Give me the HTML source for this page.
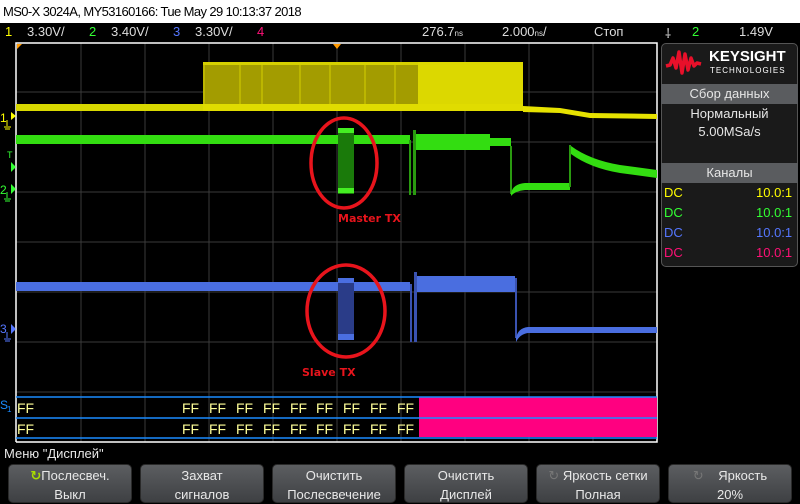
<!DOCTYPE html>
<html><head><meta charset="utf-8"><style>
*{margin:0;padding:0;box-sizing:border-box}
body{width:800px;height:503px;background:#000;position:relative;overflow:hidden;font-family:"Liberation Sans","DejaVu Sans",sans-serif}
.t{position:absolute;white-space:nowrap}
.btn{position:absolute;top:464px;width:124px;height:39px;border-radius:5px;background:linear-gradient(#5c5e61,#3e4043);border:1px solid #2a2a2a;color:#e8e8e8;font-size:13px;text-align:center;line-height:19px;padding-top:1px}
.hdr{position:absolute;left:661px;width:137px;height:20px;background:#5a5c5f;color:#e6e6e6;font-size:13px;text-align:center;line-height:20px}
</style></head><body>
<div style="position:absolute;left:0;top:0;width:800px;height:23px;background:#fff"></div>
<div class="t" style="left:3px;top:4px;font-size:13px;color:#000;letter-spacing:-0.6px">MS0-X 3024A, MY53160166: Tue May 29 10:13:37 2018</div>
<div class="t" style="left:5px;top:24px;font-size:13px;color:#ffff00">1</div>
<div class="t" style="left:27px;top:24px;font-size:13px;color:#ddd">3.30V/</div>
<div class="t" style="left:89px;top:24px;font-size:13px;color:#33ff33">2</div>
<div class="t" style="left:111px;top:24px;font-size:13px;color:#ddd">3.40V/</div>
<div class="t" style="left:173px;top:24px;font-size:13px;color:#5577ff">3</div>
<div class="t" style="left:195px;top:24px;font-size:13px;color:#ddd">3.30V/</div>
<div class="t" style="left:257px;top:24px;font-size:13px;color:#ff1177">4</div>
<div class="t" style="left:422px;top:24px;font-size:13px;color:#ddd">276.7<span style="font-size:8px">ns</span></div>
<div class="t" style="left:502px;top:24px;font-size:13px;color:#ddd">2.000<span style="font-size:8px">ns</span>/</div>
<div class="t" style="left:594px;top:24px;font-size:13px;color:#ddd">Стоп</div>
<div class="t" style="left:665px;top:24px;font-size:13px;color:#ddd">⸸</div>
<div class="t" style="left:692px;top:24px;font-size:13px;color:#33ff33">2</div>
<div class="t" style="left:739px;top:24px;font-size:13px;color:#ddd">1.49V</div>

<svg style="position:absolute;left:0;top:0" width="800" height="503">
<g stroke="#3a3a3a" stroke-width="1">
<line x1="81" y1="43" x2="81" y2="442"/><line x1="145" y1="43" x2="145" y2="442"/><line x1="209" y1="43" x2="209" y2="442"/><line x1="273" y1="43" x2="273" y2="442"/><line x1="337" y1="43" x2="337" y2="442"/><line x1="401" y1="43" x2="401" y2="442"/><line x1="465" y1="43" x2="465" y2="442"/><line x1="529" y1="43" x2="529" y2="442"/><line x1="593" y1="43" x2="593" y2="442"/>
<line x1="16" y1="92" x2="657" y2="92"/><line x1="16" y1="142" x2="657" y2="142"/><line x1="16" y1="192" x2="657" y2="192"/><line x1="16" y1="242" x2="657" y2="242"/><line x1="16" y1="292" x2="657" y2="292"/><line x1="16" y1="342" x2="657" y2="342"/><line x1="16" y1="392" x2="657" y2="392"/>
</g>
<polyline points="16,442 16,43 657,43 657,442 16,442" fill="none" stroke="#fff" stroke-width="1.5"/>
<path d="M333,44 l4,5 l4,-5z" fill="#f90"/><path d="M17,44 h5 l-5,5z" fill="#f90"/>
<rect x="16" y="104" width="190" height="7" fill="#d8d800"/>
<rect x="203" y="62" width="216" height="46" fill="#a39c00"/>
<g stroke="#d6d000" stroke-width="1"><line x1="204" y1="62" x2="204" y2="108"/><line x1="240" y1="62" x2="240" y2="108"/><line x1="262" y1="62" x2="262" y2="108"/><line x1="300" y1="62" x2="300" y2="108"/><line x1="330" y1="62" x2="330" y2="108"/><line x1="365" y1="62" x2="365" y2="108"/><line x1="395" y1="62" x2="395" y2="108"/></g>
<rect x="203" y="62" width="216" height="3" fill="#d6d000"/>
<rect x="418" y="62" width="105" height="47" fill="#dcd800"/>
<rect x="203" y="104" width="320" height="7" fill="#e0dc00"/>
<path d="M523,106 L560,108 L590,113 L657,114 L657,119 L590,118 L560,113 L523,112z" fill="#e6e200"/>
<rect x="16" y="135" width="322" height="9" fill="#33dd11"/>
<rect x="338" y="128" width="16" height="66" fill="#1a7a0a"/>
<rect x="338" y="128" width="16" height="5" fill="#44ee22"/>
<rect x="338" y="188" width="16" height="5" fill="#44ee22"/>
<rect x="354" y="135" width="56" height="9" fill="#33dd11"/>
<rect x="409" y="140" width="2" height="55" fill="#2a9a10"/>
<rect x="413" y="130" width="3" height="65" fill="#2a9a10"/>
<rect x="416" y="134" width="74" height="16" fill="#33dd11"/>
<rect x="490" y="138" width="21" height="8" fill="#33dd11"/>
<rect x="510" y="146" width="2" height="48" fill="#2a9a10"/>
<path d="M511,193 Q513,184 525,183 L570,183 L570,190 L525,190 Q515,191 511,196z" fill="#33dd11"/>
<rect x="569" y="145" width="2" height="42" fill="#2a9a10"/>
<path d="M571,146 Q590,160 620,165 L657,170 L657,178 L620,173 Q590,168 571,154z" fill="#33dd11"/>
<rect x="16" y="282" width="322" height="9" fill="#4a6ee0"/>
<rect x="338" y="278" width="16" height="62" fill="#2a3c88"/>
<rect x="338" y="334" width="16" height="6" fill="#4a6ee0"/>
<rect x="338" y="278" width="16" height="5" fill="#4a6ee0"/>
<rect x="354" y="282" width="56" height="9" fill="#4a6ee0"/>
<rect x="410" y="284" width="2" height="58" fill="#3a52b0"/>
<rect x="414" y="272" width="3" height="70" fill="#3a52b0"/>
<rect x="417" y="276" width="98" height="16" fill="#4a6ee0"/>
<rect x="515" y="278" width="2" height="60" fill="#3a52b0"/>
<path d="M516,338 Q518,328 528,327 L657,327 L657,333 L528,333 Q520,334 516,342z" fill="#4a6ee0"/>
<ellipse cx="344" cy="163" rx="33" ry="45" fill="none" stroke="#e8141c" stroke-width="3.5"/>
<ellipse cx="346" cy="311" rx="39" ry="46" fill="none" stroke="#e8141c" stroke-width="3.5"/>
<text x="338" y="222" fill="#e8141c" font-size="11" font-weight="bold" font-family="DejaVu Sans">Master TX</text>
<text x="302" y="376" fill="#e8141c" font-size="11" font-weight="bold" font-family="DejaVu Sans">Slave TX</text>
<rect x="419" y="397" width="238" height="40" fill="#ff0080"/>
<g stroke="#1a8cff" stroke-width="1.5"><line x1="16" y1="397" x2="657" y2="397"/><line x1="16" y1="418" x2="657" y2="418"/><line x1="16" y1="438" x2="657" y2="438"/></g>
<g fill="#ffff99" font-size="14" font-family="Liberation Sans">
<text x="17" y="413">FF</text><text x="17" y="434">FF</text>
<text x="182" y="413">FF</text><text x="209" y="413">FF</text><text x="236" y="413">FF</text><text x="263" y="413">FF</text><text x="290" y="413">FF</text><text x="316" y="413">FF</text><text x="343" y="413">FF</text><text x="370" y="413">FF</text><text x="397" y="413">FF</text>
<text x="182" y="434">FF</text><text x="209" y="434">FF</text><text x="236" y="434">FF</text><text x="263" y="434">FF</text><text x="290" y="434">FF</text><text x="316" y="434">FF</text><text x="343" y="434">FF</text><text x="370" y="434">FF</text><text x="397" y="434">FF</text>
</g>
<g font-size="12" font-family="Liberation Sans">
<text x="0" y="122" fill="#ffff00">1</text><path d="M11,112 l5,4 l-5,4z" fill="#ffff00"/><path d="M7,120 v6 M4,127 h7 M5,129 h5" stroke="#ffff00" fill="none"/>
<text x="7" y="158" fill="#33ff33" font-size="9">T</text><path d="M11,162 l5,5 l-5,5z" fill="#33ff33"/>
<text x="0" y="194" fill="#33ff33">2</text><path d="M11,184 l5,5 l-5,5z" fill="#33ff33"/><path d="M7,192 v6 M4,199 h7 M5,201 h5" stroke="#33ff33" fill="none"/>
<text x="0" y="333" fill="#5577ff">3</text><path d="M11,324 l5,5 l-5,5z" fill="#5577ff"/><path d="M7,332 v6 M4,339 h7 M5,341 h5" stroke="#5577ff" fill="none"/>
<text x="0" y="409" fill="#1a8cff">S</text><text x="7" y="412" fill="#1a8cff" font-size="8">1</text>
</g>
</svg>
<div style="position:absolute;left:661px;top:43px;width:137px;height:224px;border:1px solid #555;border-radius:5px;background:#1a1a1a"></div>
<svg style="position:absolute;left:665px;top:48px" width="40" height="30"><path d="M1,18 L5,17 L8,10 L11,20 L14,4 L17,25 L20,6 L23,22 L26,10 L29,18 L32,15 L36,16" fill="none" stroke="#e8102a" stroke-width="3.5" stroke-linejoin="round"/></svg>
<div class="t" style="left:709px;top:48px;font-size:15px;font-weight:bold;color:#fff">KEYSIGHT</div>
<div class="t" style="left:710px;top:66px;font-size:8px;color:#fff;letter-spacing:1px">TECHNOLOGIES</div>
<div class="hdr" style="top:84px">Сбор данных</div>
<div class="t" style="left:661px;top:106px;width:137px;text-align:center;font-size:13px;color:#e6e6e6">Нормальный</div>
<div class="t" style="left:661px;top:124px;width:137px;text-align:center;font-size:13px;color:#e6e6e6">5.00MSa/s</div>
<div class="hdr" style="top:163px">Каналы</div>
<div class="t" style="left:664px;top:185px;font-size:13px;color:#ffff00">DC</div><div class="t" style="left:756px;top:185px;font-size:13px;color:#ffff00">10.0:1</div>
<div class="t" style="left:664px;top:205px;font-size:13px;color:#33ff33">DC</div><div class="t" style="left:756px;top:205px;font-size:13px;color:#33ff33">10.0:1</div>
<div class="t" style="left:664px;top:225px;font-size:13px;color:#5577ff">DC</div><div class="t" style="left:756px;top:225px;font-size:13px;color:#5577ff">10.0:1</div>
<div class="t" style="left:664px;top:245px;font-size:13px;color:#ff1177">DC</div><div class="t" style="left:756px;top:245px;font-size:13px;color:#ff1177">10.0:1</div>

<div class="t" style="left:4px;top:446px;font-size:13px;color:#e6e6e6">Меню "Дисплей"</div>
<div class="btn" style="left:8px"><span style="color:#aadd00;font-weight:bold">↻</span>Послесвеч.<br>Выкл</div>
<div class="btn" style="left:140px">Захват<br>сигналов</div>
<div class="btn" style="left:272px">Очистить<br>Послесвечение</div>
<div class="btn" style="left:404px">Очистить<br>Дисплей</div>
<div class="btn" style="left:536px"><span style="color:#777">↻</span> Яркость сетки<br>Полная</div>
<div class="btn" style="left:668px"><span style="color:#777">↻</span> &nbsp; &nbsp;Яркость<br>20%</div>
</body></html>
